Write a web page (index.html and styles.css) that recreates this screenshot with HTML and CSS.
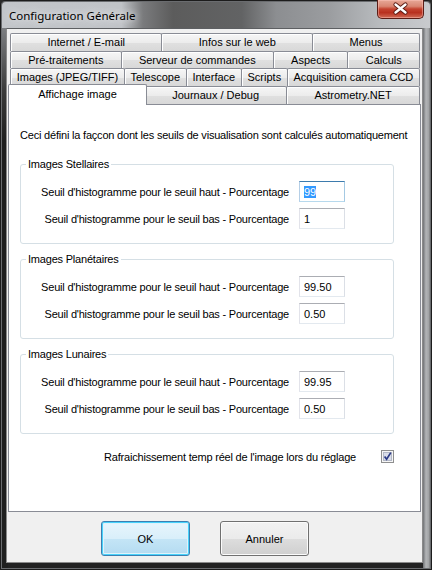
FILE: index.html
```html
<!DOCTYPE html>
<html lang="fr">
<head>
<meta charset="utf-8">
<title>Configuration Générale</title>
<link rel="stylesheet" href="styles.css">
</head>
<body>
<div class="window">
  <div class="titlebar">
    <span class="title">Configuration Générale</span>
    <div class="close">
      <svg width="47" height="19" viewBox="0 0 47 19">
        <path d="M18.5 5.5 L28.5 13.5 M28.5 5.5 L18.5 13.5" stroke="#5a1a12" stroke-width="4.2" stroke-linecap="round" fill="none"/>
        <path d="M18.5 5.5 L28.5 13.5 M28.5 5.5 L18.5 13.5" stroke="#ffffff" stroke-width="2.4" stroke-linecap="round" fill="none"/>
      </svg>
    </div>
  </div>
  <div class="client">
    <div class="tabs">
      <div class="tabrow">
        <div class="tab">Internet / E-mail</div>
        <div class="tab">Infos sur le web</div>
        <div class="tab">Menus</div>
      </div>
      <div class="tabrow short">
        <div class="tab">Pré-traitements</div>
        <div class="tab">Serveur de commandes</div>
        <div class="tab">Aspects</div>
        <div class="tab">Calculs</div>
      </div>
      <div class="tabrow">
        <div class="tab">Images (JPEG/TIFF)</div>
        <div class="tab">Telescope</div>
        <div class="tab">Interface</div>
        <div class="tab">Scripts</div>
        <div class="tab">Acquisition camera CCD</div>
      </div>
      <div class="tabrow">
        <div class="tab active">Affichage image</div>
        <div class="tab">Journaux / Debug</div>
        <div class="tab">Astrometry.NET</div>
      </div>
      <div class="page">
        <p class="desc">Ceci défini la façcon dont les seuils de visualisation sont calculés automatiquement</p>

        <fieldset class="group">
          <legend>Images Stellaires</legend>
          <div class="row">
            <span class="lbl">Seuil d'histogramme pour le seuil haut - Pourcentage</span>
            <span class="textbox focused"><span class="sel">99</span></span>
          </div>
          <div class="row">
            <span class="lbl">Seuil d'histogramme pour le seuil bas - Pourcentage</span>
            <span class="textbox">1</span>
          </div>
        </fieldset>

        <fieldset class="group">
          <legend>Images Planétaires</legend>
          <div class="row">
            <span class="lbl">Seuil d'histogramme pour le seuil haut - Pourcentage</span>
            <span class="textbox">99.50</span>
          </div>
          <div class="row">
            <span class="lbl">Seuil d'histogramme pour le seuil bas - Pourcentage</span>
            <span class="textbox">0.50</span>
          </div>
        </fieldset>

        <fieldset class="group">
          <legend>Images Lunaires</legend>
          <div class="row">
            <span class="lbl">Seuil d'histogramme pour le seuil haut - Pourcentage</span>
            <span class="textbox">99.95</span>
          </div>
          <div class="row">
            <span class="lbl">Seuil d'histogramme pour le seuil bas - Pourcentage</span>
            <span class="textbox">0.50</span>
          </div>
        </fieldset>

        <div class="check-row">
          <span class="check-label">Rafraichissement temp réel de l'image lors du réglage</span>
          <span class="checkbox">
            <svg width="13" height="13" viewBox="0 0 13 13">
              <rect x="0.5" y="0.5" width="12" height="12" fill="#f6f6f6" stroke="#8e8f8f"/>
              <rect x="2.5" y="2.5" width="8" height="8" fill="#d9dde9" stroke="#b3b8c6"/>
              <path d="M3.6 6.4 L5.6 9.2 L9.8 2.6" stroke="#2c3b86" stroke-width="1.7" fill="none"/>
            </svg>
          </span>
        </div>
      </div>
    </div>
    <div class="buttons">
      <button class="btn default">OK</button>
      <button class="btn">Annuler</button>
    </div>
  </div>
</div>
</body>
</html>
```

FILE: styles.css
```css
html, body {
  margin: 0;
  padding: 0;
  background: #2a2a2a;
}

.window {
  width: 432px;
  height: 570px;
  box-sizing: border-box;
  border: 1px solid #1c1c1c;
  border-radius: 6px 6px 0 0;
  padding: 0 8px 6px 5px;
  display: flex;
  flex-direction: column;
  background:
    linear-gradient(90deg, #c2c5c9 0, #c0c3c7 28%, #7a7b7d 33%, #5c5c5c 40%, #626364 56%, #8c8e91 64%, #9a9c9f 76%, #b8bbbe 88%, #c9cbce 100%) top left / 100% 27px no-repeat,
    linear-gradient(180deg, #7d7f82 27px, #3a3a3a 90px, #1f1f1f 140px, #1f1f1f 100%) left / 7px 100% no-repeat,
    linear-gradient(90deg, #6f7174 0, #b3b5b7 3px, #9fa1a3 6px, #4a4a4a 8px) right / 8px 100% no-repeat,
    #222222;
  box-shadow: inset 0 0 0 1px #6a6c6f;
  font-family: "Liberation Sans", Arial, sans-serif;
  font-size: 11px;
  color: #000;
}

.titlebar {
  height: 27px;
  display: flex;
  align-items: flex-start;
}

.title {
  font-family: "Noto Sans", "Open Sans", sans-serif;
  font-size: 11.5px;
  line-height: 14px;
  margin: 8px 0 0 3px;
  color: #000;
  text-shadow: 0 0 6px #e4e6e8, 0 0 10px #e4e6e8;
}

.close {
  margin: -1px -1px 0 auto;
  width: 47px;
  height: 19px;
  box-sizing: border-box;
  border: 1px solid #5b1d16;
  border-top: none;
  border-radius: 0 0 5px 5px;
  background: linear-gradient(180deg, #e7a897 0, #d98672 35%, #c4432f 50%, #b8301f 70%, #d06b55 100%);
  box-shadow: inset 0 0 0 1px rgba(255, 200, 190, 0.45);
}

.close svg {
  display: block;
  margin: -1px 0 0 -1px;
}

.client {
  flex: 1;
  display: flex;
  flex-direction: column;
  background: #f0f0f0;
  border: 1px solid #8a8a8a;
  border-top-color: #5d5f62;
}

.tabs {
  flex: 1;
  display: flex;
  flex-direction: column;
  margin: 4px 1px 0 1px;
}

.tabrow {
  display: flex;
  height: 18px;
  padding: 0 1px 0 2px;
}

.tabrow.short {
  height: 17px;
}

.tab {
  flex: 1 1 auto;
  height: 18px;
  box-sizing: border-box;
  padding: 0 4px;
  margin-left: -1px;
  border: 1px solid #898c95;
  border-bottom: none;
  border-radius: 2px 2px 0 0;
  background: linear-gradient(180deg, #f6f6f6 0, #ececec 50%, #e0e0e0 51%, #d8d8d8 100%);
  box-shadow: inset 1px 1px 0 #ffffff;
  text-align: center;
  line-height: 17px;
  white-space: nowrap;
}

.tabrow.short .tab {
  height: 17px;
  line-height: 16px;
}

.tab:first-child {
  margin-left: 0;
}

.tab.active {
  position: relative;
  z-index: 2;
  height: 21px;
  margin: -2px -2px 0 -2px;
  padding: 0 6px;
  background: #ffffff;
  box-shadow: none;
  line-height: 19px;
}

.page {
  flex: 1;
  background: #ffffff;
  border: 1px solid #898c95;
  padding: 24px 26px 0 11px;
  letter-spacing: -0.2px;
}

.desc {
  margin: 0;
  line-height: 13px;
  white-space: nowrap;
}

.group {
  margin: 16px 0 0 0;
  padding: 10px 48px 14px 0;
  border: 1px solid #d5dfe5;
  border-radius: 3px;
  min-width: 0;
}

.group + .group {
  margin-top: 9px;
}

.group legend {
  margin-left: 5px;
  padding: 0 2px;
  line-height: 13px;
}

.row {
  display: flex;
  justify-content: flex-end;
  align-items: center;
  height: 21px;
}

.row + .row {
  margin-top: 6px;
}

.lbl {
  margin-right: 10px;
  white-space: nowrap;
}

.textbox {
  display: block;
  width: 46px;
  height: 21px;
  box-sizing: border-box;
  border: 1px solid;
  border-color: #abadb3 #dbdfe6 #e3e9ef #e2e3ea;
  padding: 3px 3px 0 4px;
  line-height: 14px;
  background: #fff;
  letter-spacing: 0;
}

.textbox.focused {
  border-color: #3d7bad #a4c9e3 #b7d9ed #b5cfe7;
}

.sel {
  background: #3399ff;
  color: #ffffff;
}

.check-row {
  display: flex;
  justify-content: flex-end;
  align-items: center;
  margin-top: 16px;
  height: 13px;
}

.check-label {
  margin-right: 25px;
  white-space: nowrap;
}

.checkbox svg {
  display: block;
}

.buttons {
  height: 50px;
  box-sizing: border-box;
  padding: 9px 0 0 94px;
  display: flex;
  align-items: flex-start;
  gap: 30px;
}

.btn {
  width: 89px;
  height: 35px;
  border: 1px solid #707070;
  border-radius: 3px;
  background: linear-gradient(180deg, #f2f2f2 0, #ebebeb 50%, #dddddd 51%, #cfcfcf 100%);
  box-shadow: inset 0 0 0 1px #fbfbfb;
  font-family: "Liberation Sans", Arial, sans-serif;
  font-size: 11px;
  color: #000;
  padding: 0;
}

.btn.default {
  border-color: #3c7fb1;
  background: linear-gradient(180deg, #e8f5fc 0, #d9effa 50%, #c4e5f6 51%, #b4dbf1 100%);
  box-shadow: inset 0 0 0 1px #48d2fb, inset 0 0 0 2px #dff2fb;
}
```
